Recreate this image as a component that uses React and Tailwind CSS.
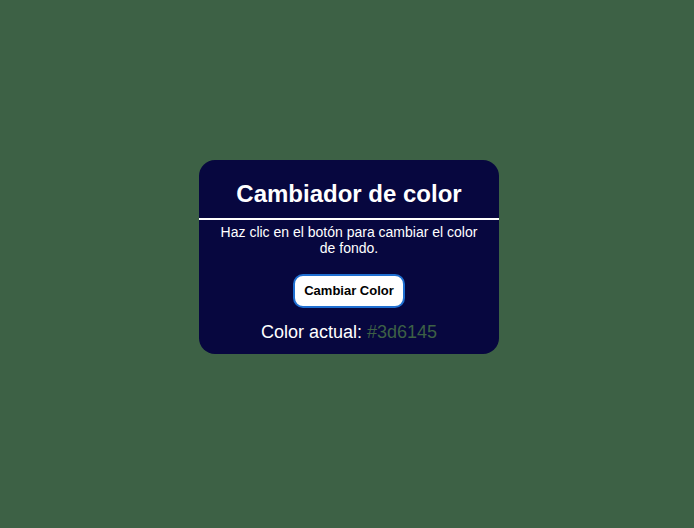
export default function App() {
  const color = '#3d6145'
  return (
    <div className="min-h-screen w-full flex items-center justify-center bg-[#3d6145]" style={{ fontFamily: '"Liberation Sans", Arial, sans-serif' }}>
      <div className="w-[300px] bg-[#07073f] rounded-[16px] text-white text-center pt-[20px] pb-[11px] mt-[-15px] ml-[4px]">
        <h1 className="text-[24px] leading-[28px] font-bold px-4">Cambiador de color</h1>
        <div className="h-[2px] bg-white mt-[10px]" />
        <p className="text-[14px] leading-[16px] px-[16px] mt-[4px]">
          Haz clic en el botón para cambiar el color de fondo.
        </p>
        <div className="mt-[18px] flex justify-center">
          <button className="h-[34px] w-[112px] bg-white text-black text-[13px] font-bold rounded-[10px] border-2 border-[#1f6fd1]">
            Cambiar Color
          </button>
        </div>
        <div className="text-[18px] leading-[21px] mt-[14px]">
          Color actual: <span className="text-[#3d6145]">{color}</span>
        </div>
      </div>
    </div>
  )
}
